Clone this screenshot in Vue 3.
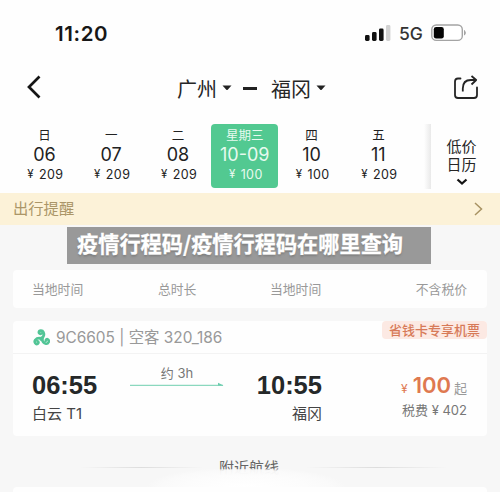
<script setup>
const days = [
  { week: '日', date: '06', price: '209' },
  { week: '一', date: '07', price: '209' },
  { week: '二', date: '08', price: '209' },
  { week: '星期三', date: '10-09', price: '100', active: true },
  { week: '四', date: '10', price: '100' },
  { week: '五', date: '11', price: '209' },
]
</script>

<template>
  <main class="screen">
    <header class="status">
      <span class="clock">11:20</span>
      <div class="signals">
        <svg class="bars" width="26" height="17" viewBox="0 0 26 17">
          <rect x="0" y="10" width="4.6" height="6" rx="1.4" fill="#111" />
          <rect x="7" y="7" width="4.6" height="9" rx="1.4" fill="#111" />
          <rect x="14" y="3.5" width="4.6" height="12.5" rx="1.4" fill="#111" />
          <rect x="21" y="0" width="4.4" height="16" rx="1.4" fill="#d2d2d2" />
        </svg>
        <span class="network">5G</span>
        <svg class="battery" width="36" height="18" viewBox="0 0 36 18">
          <rect x="0.8" y="1" width="30.5" height="15.4" rx="4.5" fill="#fff" stroke="#a4a4a4" stroke-width="1.4" />
          <rect x="2.8" y="3" width="10" height="11.6" rx="2.3" fill="#050505" />
          <path d="M33.5 6.5q1.8 2.3 0 4.6z" fill="#a4a4a4" stroke="#a4a4a4" />
        </svg>
      </div>
    </header>

    <nav class="nav">
      <svg class="back" width="15" height="24" viewBox="0 0 15 24">
        <path d="M12.5 1.5L2 12l10.500 10.500" fill="none" stroke="#151515" stroke-width="2.700" />
      </svg>
      <div class="route">
        <span>广州</span>
        <svg class="caret" width="10" height="6" viewBox="0 0 10 6"><path d="M.5.5h9L5.700 4.700q-.7.7-1.400 0z" fill="#222" /></svg>
        <i class="dash"></i>
        <span>福冈</span>
        <svg class="caret" width="10" height="6" viewBox="0 0 10 6"><path d="M.5.5h9L5.700 4.700q-.7.7-1.400 0z" fill="#222" /></svg>
      </div>
      <svg class="share" width="26" height="26" viewBox="0 0 26 26" fill="none" stroke="#252525" stroke-width="1.800">
        <path d="M7.500 3.500H5Q2 3.500 2 6.500v13.500q0 3 3 3h16q3 0 3-3v-7.500" stroke-linecap="round" />
        <path d="M9.800 16.500v-3q0-8.500 8-8.500h5.200M18.500 1l4.700 4-4.700 4.500" stroke-linejoin="round" />
      </svg>
    </nav>

    <section class="dates">
      <div class="strip">
        <div v-for="d in days" :key="d.date" class="day" :class="{ active: d.active }">
          <span class="week">{{ d.week }}</span>
          <span class="date">{{ d.date }}</span>
          <span class="price"><b class="yen">¥</b>{{ d.price }}</span>
        </div>
      </div>
      <div class="edge"></div>
      <div class="calendar">
        <span>低价</span>
        <span>日历</span>
        <svg width="12" height="8" viewBox="0 0 12 8"><path d="M1.500 1.500L6 5.500l4.500-4" fill="none" stroke="#151515" stroke-width="2.300" /></svg>
      </div>
    </section>

    <section class="notice">
      <span>出行提醒</span>
      <svg width="9" height="14" viewBox="0 0 9 14"><path d="M1 1l6.500 6L1 13" fill="none" stroke="#a89363" stroke-width="1.500" /></svg>
    </section>

    <section class="banner">
      <h1>疫情行程码/疫情行程码在哪里查询</h1>
    </section>

    <section class="columns">
      <span>当地时间</span><span>总时长</span><span>当地时间</span><span>不含税价</span>
    </section>

    <article class="flight">
      <header class="flight-head">
        <svg class="logo" width="17" height="17" viewBox="0 0 17 17" fill="none" stroke="#52c596" stroke-width="2.600" stroke-linecap="round">
          <path d="M8.700 9.500Q12 6.500 10.500 3.200C9.500 1 6 1.200 5.800 3.300c0 1.300 1.500 2 2.500 1.200" />
          <path d="M8.700 9.500Q4.500 8.200 2.200 11C.8 13 2.700 15.800 4.700 14.800c1.200-.7 1-2.200-.2-2.600" />
          <path d="M8.700 9.500Q9.500 14 13 14.700c2.400.3 3.800-2.700 2-4.200-1.200-.8-2.300.1-2.200 1.300" />
          <circle cx="8.600" cy="9.700" r="2.300" fill="#52c596" stroke="none" />
        </svg>
        <span class="number">9C6605 | 空客 320_186</span>
        <span class="tag">省钱卡专享机票</span>
      </header>
      <div class="flight-body">
        <div class="depart">
          <strong>06:55</strong>
          <span>白云 T1</span>
        </div>
        <div class="duration">
          <span>约 3h</span>
          <svg width="94" height="5" viewBox="0 0 94 5"><path d="M0 3.300h93" stroke="#8bd8be" stroke-width="1.200" /><path d="M88 .8l5.500 2.700H88z" fill="#6bcbad" /></svg>
        </div>
        <div class="arrive">
          <strong>10:55</strong>
          <span>福冈</span>
        </div>
        <div class="fare">
          <div class="amount"><small>¥</small><b>100</b><em>起</em></div>
          <span>税费 ¥ 402</span>
        </div>
      </div>
    </article>

    <footer class="nearby">
      <i class="rule left"></i>
      <span class="nearby-title">附近航线</span>
      <i class="rule right"></i>
      <div class="glow"></div>
    </footer>
    <div class="next-card"></div>
  </main>
</template>

<style>
body { margin: 0; background: #f7f7f7; }
</style>

<style scoped>
* { box-sizing: border-box; }
.screen {
  width: 500px;
  height: 492px;
  overflow: hidden;
  background: #f7f7f7;
  color: #262626;
  font-family: Inter, "Noto Sans CJK SC", sans-serif;
  white-space: nowrap;
}
.status {
  height: 66px;
  padding: 20px 33px 0 55px;
  display: flex;
  justify-content: space-between;
  background: #fefefe;
}
.clock { font-size: 20.5px; line-height: 27px; font-weight: 600; letter-spacing: .6px; color: #171717; }
.signals { display: flex; align-items: flex-start; }
.bars { margin-top: 5px; }
.network { margin-left: 8px; width: 32px; font-size: 17.500px; line-height: 28px; font-weight: 500; color: #333; }
.battery { margin-top: 4px; }
.nav {
  height: 58px;
  display: grid;
  grid-template-columns: 177px 1fr 47px;
  background: #fefefe;
}
.back { margin: 9px 0 0 27px; }
.share { margin-top: 9px; }
.route { display: flex; align-items: center; height: 44px; font-size: 20px; }
.route .caret { margin-left: 5px; }
.dash { width: 14px; height: 3px; background: #222; margin: 0 14px 0 11px; }
.dates {
  height: 69px;
  display: grid;
  grid-template-columns: 424px 7px 1fr;
  background: #fefefe;
}
.strip { display: grid; grid-template-columns: repeat(6, 66.800px); padding-left: 11px; }
.day { height: 64px; display: flex; flex-direction: column; align-items: center; color: #222; }
.week { height: 20px; margin-top: 2px; font-size: 12.500px; line-height: 20px; }
.date { height: 19px; font-size: 18px; line-height: 18px; }
.price { height: 20px; padding-left: 2px; font-size: 12.500px; line-height: 19px; display: flex; gap: 5px; letter-spacing: .4px; }
.yen { font-weight: 400; font-size: 11.500px; }
.active { background: #52c991; color: #e7faef; border-radius: 4px; }
.edge { height: 65px; background: linear-gradient(90deg, #fefefe, #e9e9e9); }
.calendar { display: flex; flex-direction: column; align-items: center; padding: 14px 8px 0 0; font-size: 15px; line-height: 18px; }
.calendar svg { margin-top: 4px; }
.notice {
  height: 32px;
  padding: 0 17px 0 13px;
  display: flex;
  align-items: center;
  justify-content: space-between;
  background: #fcf2d8;
  color: #ab9668;
  font-size: 15.300px;
}
.notice span { line-height: 30px; }
.banner {
  width: 364px;
  height: 37px;
  margin: 2px 0 0 67px;
  background: #999;
  padding-left: 10px;
}
.banner h1 {
  margin: 0;
  font-size: 21.200px;
  line-height: 32px;
  font-weight: 700;
  font-family: "Noto Sans CJK SC", sans-serif;
  color: #fff;
  -webkit-text-stroke: .3px #fff;
  text-shadow: 0 2px 2px rgba(80, 80, 80, .35);
}
.columns {
  height: 38px;
  margin: 6px 13px 0;
  padding: 0 20px 2px 19px;
  border-radius: 4px;
  background: #fefefe;
  display: grid;
  grid-template-columns: 126px 112px 1fr auto;
  align-items: center;
  font-size: 12.800px;
  color: #999;
}
.flight { height: 115px; margin: 13px 13px 0; border-radius: 4px; background: #fefefe; }
.flight-head {
  height: 33px;
  display: flex;
  align-items: flex-start;
  padding-left: 20px;
  border-bottom: 1px solid #f3f3f3;
}
.logo { margin-top: 8px; }
.number { margin-left: 6px; font-size: 15.400px; line-height: 33px; color: #999; }
.tag {
  margin-left: auto;
  height: 18px;
  padding: 0 7px;
  border-radius: 4px;
  background: #fce9e3;
  color: #d77a58;
  font-size: 13px;
  font-weight: 500;
  line-height: 18px;
}
.flight-body { display: grid; grid-template-columns: 98px 94px 98px 1fr; padding: 0 20px 0 19px; }
.depart, .arrive { display: flex; flex-direction: column; padding-top: 16px; font-size: 15px; line-height: 24px; color: #444; }
.depart strong, .arrive strong {
  height: 32px;
  font-family: "Liberation Sans", sans-serif;
  font-size: 25.500px;
  line-height: 30px;
  color: #252829;
}
.arrive, .fare { align-items: flex-end; }
.duration { display: flex; flex-direction: column; align-items: center; padding-top: 10px; font-size: 13px; line-height: 18px; color: #777; }
.fare { display: flex; flex-direction: column; padding-top: 17px; color: #777; font-size: 13px; line-height: 22px; }
.amount { display: flex; align-items: baseline; height: 28px; line-height: 28px; color: #df7950; }
.amount small { font-size: 12px; margin-right: 5px; }
.amount b { font-size: 22px; font-weight: 600; }
.amount em { font-style: normal; font-size: 13px; color: #999; margin-left: 3px; }
.nearby {
  position: relative;
  height: 51px;
  display: grid;
  grid-template-columns: 219px 61px 220px;
}
.nearby-title { padding-top: 22px; font-size: 15px; line-height: 20px; color: #666; }
.glow {
  position: absolute;
  left: 146px;
  top: 33px;
  width: 200px;
  height: 18px;
  background: radial-gradient(ellipse 100px 20px at 50% 100%, #fff 0%, #fcfcfc 60%, rgba(250, 250, 250, .95) 85%, rgba(247, 247, 247, 0) 100%);
}
.rule { height: 1px; margin-top: 31px; background: linear-gradient(90deg, transparent, #ddd, transparent); }
.left { margin-left: 80px; margin-right: 16px; }
.right { margin-left: 26px; margin-right: 52px; }
.next-card { height: 5px; margin: 0 13px; border-radius: 4px 4px 0 0; background: #fefefe; }
</style>
